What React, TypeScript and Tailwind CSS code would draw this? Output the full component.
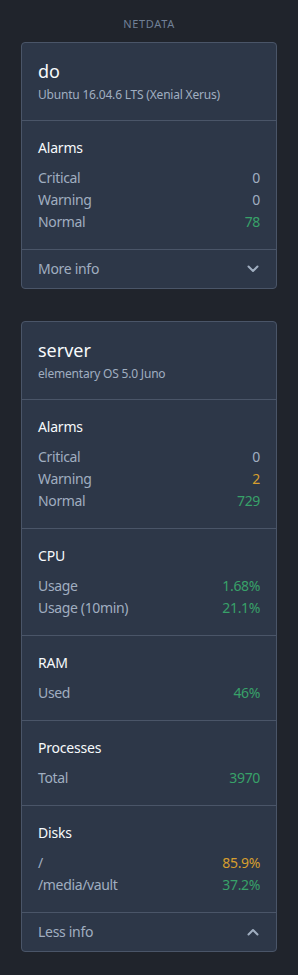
type Row = { label: string; value: string; tone?: "ok" | "warn" };
type Section = { title: string; rows: Row[] };

function Chevron({ up }: { up?: boolean }) {
  return (
    <svg width="14" height="14" viewBox="0 0 14 14" fill="none" className="text-[#a0aec0]">
      <path
        d={up ? "M2.5 9.5 7 5l4.5 4.5" : "M2.5 4.5 7 9l4.5-4.5"}
        stroke="currentColor"
        strokeWidth="2"
        strokeLinecap="round"
        strokeLinejoin="round"
      />
    </svg>
  );
}

function StatSection({ section }: { section: Section }) {
  return (
    <div className="border-t border-[#4a5568] px-4 pt-[17px] pb-4">
      <h3 className="text-[14px] leading-5 tracking-[-0.2px] text-[#f7fafc]">{section.title}</h3>
      <div className="mt-[9px]">
        {section.rows.map((row) => (
          <div
            key={row.label}
            className="flex justify-between text-[14px] leading-[22px] tracking-[-0.35px] text-[#a0aec0]"
          >
            <span>{row.label}</span>
            <span
              className={
                row.tone === "ok" ? "text-[#38a169]" : row.tone === "warn" ? "text-[#d69e2e]" : "text-[#a0aec0]"
              }
            >
              {row.value}
            </span>
          </div>
        ))}
      </div>
    </div>
  );
}

function HostCard({
  name,
  os,
  sections,
  expanded,
}: {
  name: string;
  os: string;
  sections: Section[];
  expanded?: boolean;
}) {
  return (
    <article className="rounded border border-[#4a5568] bg-[#2d3748]">
      <div className="px-4 pt-4 pb-[17px]">
        <h2 className="text-[18px] leading-6 text-[#f7fafc]">{name}</h2>
        <p className="mt-1 text-[12px] leading-4 tracking-[-0.2px] text-[#a0aec0]">{os}</p>
      </div>
      {sections.map((section) => (
        <StatSection key={section.title} section={section} />
      ))}
      <div className="flex items-center justify-between border-t border-[#4a5568] px-4 py-[9px] text-[14px] leading-5 tracking-[-0.3px] text-[#a0aec0]">
        <span>{expanded ? "Less info" : "More info"}</span>
        <Chevron up={expanded} />
      </div>
    </article>
  );
}

export default function App() {
  const alarmsDo: Section = {
    title: "Alarms",
    rows: [
      { label: "Critical", value: "0" },
      { label: "Warning", value: "0" },
      { label: "Normal", value: "78", tone: "ok" },
    ],
  };

  const serverSections: Section[] = [
    {
      title: "Alarms",
      rows: [
        { label: "Critical", value: "0" },
        { label: "Warning", value: "2", tone: "warn" },
        { label: "Normal", value: "729", tone: "ok" },
      ],
    },
    {
      title: "CPU",
      rows: [
        { label: "Usage", value: "1.68%", tone: "ok" },
        { label: "Usage (10min)", value: "21.1%", tone: "ok" },
      ],
    },
    { title: "RAM", rows: [{ label: "Used", value: "46%", tone: "ok" }] },
    { title: "Processes", rows: [{ label: "Total", value: "3970", tone: "ok" }] },
    {
      title: "Disks",
      rows: [
        { label: "/", value: "85.9%", tone: "warn" },
        { label: "/media/vault", value: "37.2%", tone: "ok" },
      ],
    },
  ];

  return (
    <div className="min-h-[975px] bg-[#20242c] px-[21px] pt-4 pb-6 font-['Noto_Sans',sans-serif]">
      <p className="text-center text-[11px] leading-4 tracking-[0.06em] text-[#718096]">NETDATA</p>
      <div className="mt-2.5 flex flex-col gap-8">
        <HostCard name="do" os="Ubuntu 16.04.6 LTS (Xenial Xerus)" sections={[alarmsDo]} />
        <HostCard name="server" os="elementary OS 5.0 Juno" sections={serverSections} expanded />
      </div>
    </div>
  );
}
